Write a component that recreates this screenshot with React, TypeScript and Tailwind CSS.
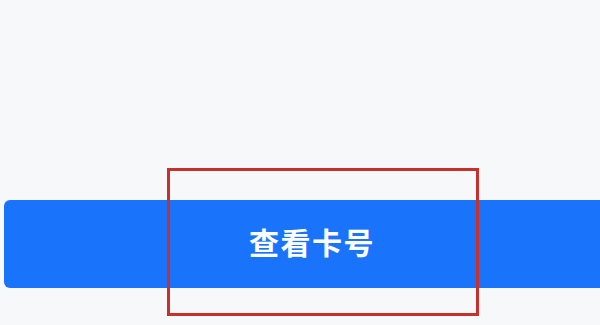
export default function App() {
  return (
    <div
      className="relative h-[325px] w-[600px] overflow-hidden bg-[#f7f8fa]"
      style={{ fontFamily: '"Noto Sans CJK SC", "Noto Sans", sans-serif' }}
    >
      <div className="pt-[200px] pl-[4px]">
        {/* Action button, runs off the right edge */}
        <button className="flex h-[88px] w-[620px] items-center rounded-[6px] bg-[#1a74fb] pb-[6px] pl-[245px] text-[30px] font-bold tracking-[1.5px] text-white">
          查看卡号
        </button>
      </div>

      {/* Highlight box */}
      <div className="pointer-events-none absolute left-[167px] top-[168px] h-[148px] w-[312px] border-[3px] border-[#c8302c]" />
    </div>
  );
}
